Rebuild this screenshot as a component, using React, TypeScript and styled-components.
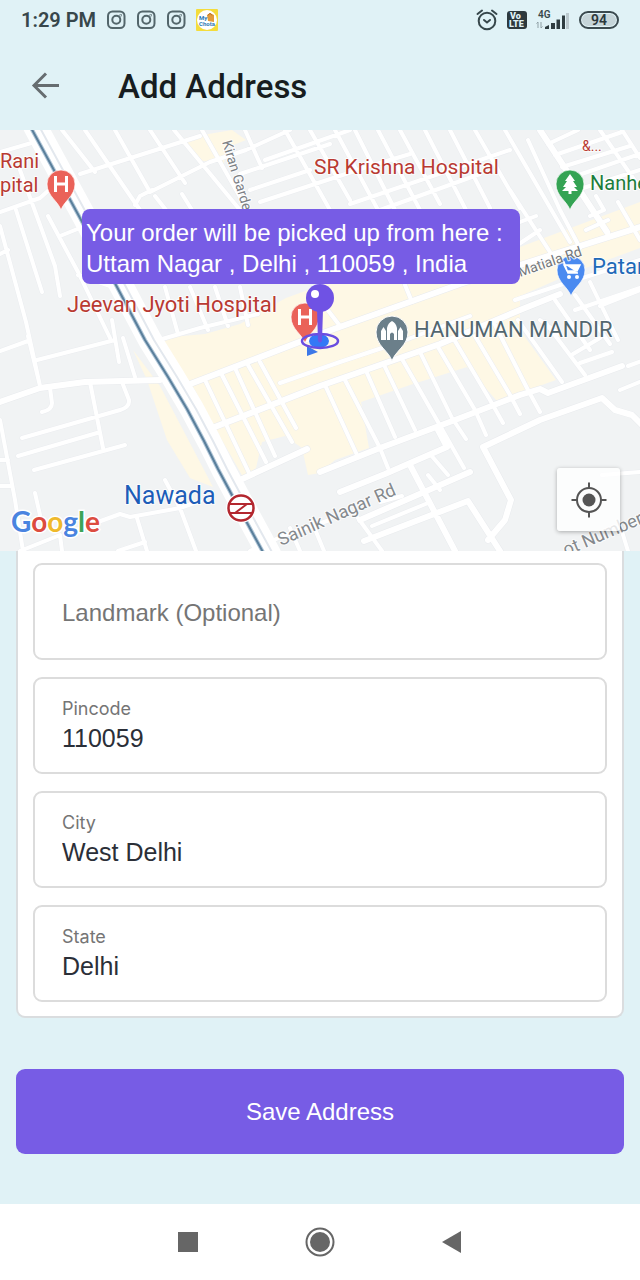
import React, { useId, useState } from "react";
import styled, { createGlobalStyle } from "styled-components";

const GlobalStyle = createGlobalStyle`
  *, *::before, *::after { box-sizing: border-box; }
  body { margin: 0; background: #e0f2f6; font-family: "Liberation Sans", sans-serif; }
  button, input { font: inherit; }
`;

const Screen = styled.div`
  min-height: 100vh;
  display: flex;
  flex-direction: column;
  background: #e0f2f6;
`;

const StatusBar = styled.div`
  display: flex;
  align-items: center;
  justify-content: space-between;
  height: 40px;
  padding: 0 21px;
  color: #37474b;
  font-family: Roboto, sans-serif;
`;

const StatusGroup = styled.div<{ $gap: number }>`
  display: flex;
  align-items: center;
  gap: ${(p) => p.$gap}px;
  svg { display: block; }
`;

const Clock = styled.span`
  font-size: 20px;
  line-height: 24px;
  font-weight: 600;
`;

const Battery = styled.span`
  display: flex;
  align-items: center;
  justify-content: center;
  width: 40px;
  height: 18px;
  border: 2px solid #3b4a4f;
  border-radius: 9px;
  background: #c6d5d9;
  box-shadow: inset 0 0 0 1px #e0f2f6;
  font-size: 14px;
  line-height: 14px;
  font-weight: 600;
  color: #2c383c;
`;

const Header = styled.header`
  display: flex;
  align-items: center;
  gap: 56px;
  height: 90px;
  padding: 3px 30px 0;
`;

const BackButton = styled.button`
  display: flex;
  width: 32px;
  height: 32px;
  padding: 0;
  border: 0;
  background: none;
  color: #666d70;
`;

const Title = styled.h1`
  margin: 0;
  font-family: Roboto, sans-serif;
  font-size: 33px;
  line-height: 40px;
  font-weight: 500;
  color: #171d20;
`;

const MapArea = styled.section`
  position: relative;
  height: 421px;
  overflow: hidden;
`;

const MapDrawing = styled.svg`
  display: block;
  width: 100%;
  height: 100%;
  font-family: Roboto, sans-serif;
`;

const PickupNote = styled.div`
  position: absolute;
  top: 79px;
  left: calc(50% - 238px);
  width: 438px;
  padding: 8px 4px 5px;
  border-radius: 8px;
  background: #775ce5;
  color: #fff;
  font-size: 24px;
  line-height: 31px;
  white-space: nowrap;
`;

const LocateButton = styled.button`
  position: absolute;
  right: 20px;
  bottom: 20px;
  display: flex;
  align-items: center;
  justify-content: center;
  width: 63px;
  height: 63px;
  padding: 0;
  border: 0;
  border-radius: 3px;
  background: rgba(255, 255, 255, 0.8);
  box-shadow: 0 1px 4px rgba(0, 0, 0, 0.3);
`;

const Form = styled.form`
  flex: 1;
  padding: 0 16px 49px;
`;

const Card = styled.div`
  display: flex;
  flex-direction: column;
  gap: 17px;
  padding: 12px 15px 14px;
  border: 2px solid #dadddf;
  border-top: 0;
  border-radius: 0 0 9px 9px;
  background: #fff;
`;

const FieldBox = styled.div`
  display: flex;
  flex-direction: column;
  justify-content: center;
  height: 97px;
  padding: 0 27px;
  border: 2px solid #dcdcdc;
  border-radius: 9px;
`;

const FieldLabel = styled.label`
  font-family: Inter, sans-serif;
  font-size: 18px;
  line-height: 24px;
  color: #757575;
`;

const HiddenLabel = styled.label`
  position: absolute;
  width: 1px;
  height: 1px;
  overflow: hidden;
  clip-path: inset(50%);
`;

const FieldInput = styled.input`
  width: 100%;
  height: 34px;
  padding: 0;
  border: 0;
  outline: 0;
  background: none;
  font-size: 25px;
  line-height: 34px;
  color: #2b2f38;
  &::placeholder { font-size: 24px; color: #757575; opacity: 1; }
`;

const SaveButton = styled.button`
  display: block;
  width: 100%;
  height: 85px;
  margin-top: 51px;
  border: 0;
  border-radius: 9px;
  background: #775ce5;
  color: #fff;
  font-size: 24px;
  line-height: 32px;
`;

const NavBar = styled.nav`
  display: flex;
  align-items: center;
  justify-content: center;
  gap: 100px;
  height: 76px;
  background: #fff;
`;

const NavButton = styled.button`
  display: flex;
  align-items: center;
  justify-content: center;
  width: 32px;
  height: 32px;
  padding: 0;
  border: 0;
  background: none;
`;

const InstagramIcon = () => (
  <svg width="20" height="20" viewBox="0 0 20 20" fill="none" stroke="#53666b" strokeWidth="2">
    <rect x="2" y="1.5" width="16.5" height="16.5" rx="4.5" />
    <circle cx="10.3" cy="9.8" r="4" />
    <circle cx="14.7" cy="5.200" r="0.3" />
  </svg>
);

const ShopAppIcon = () => (
  <svg width="22" height="22" viewBox="0 0 22 22">
    <rect width="22" height="22" rx="1" fill="#f4dc3c" />
    <circle cx="11" cy="11" r="10" fill="#fff" />
    <path d="M11 6l3-2 4 2v7l-6-1z" fill="#e39a3c" />
    <path d="M12 6.500q2-4 4 0" stroke="#b87328" fill="none" />
    <text x="3" y="11" fontSize="6" fontWeight="700" fill="#2b78b5" fontFamily="Roboto, sans-serif">My</text>
    <text x="3" y="17" fontSize="6" fontWeight="700" fill="#2b78b5" fontFamily="Roboto, sans-serif">Chota</text>
  </svg>
);

const AlarmIcon = () => (
  <svg width="22" height="22" viewBox="0 0 22 22" fill="none" stroke="#37474b" strokeWidth="2" strokeLinecap="round">
    <circle cx="11" cy="12" r="8.300" />
    <path d="M1.500 5L6 1.500M20.500 5L16 1.500M8 11l3 2.500 3-2.500" />
  </svg>
);

const VolteIcon = () => (
  <svg width="20" height="18" viewBox="0 0 20 18" fontFamily="Roboto, sans-serif" fontWeight="900" fill="#e0f2f6">
    <rect width="20" height="18" rx="3" fill="#2d393d" />
    <text x="3" y="8" fontSize="9">Vo</text>
    <text x="2" y="16" fontSize="9">LTE</text>
  </svg>
);

const SignalIcon = () => (
  <svg width="34" height="20" viewBox="0 0 34 20">
    <text x="2" y="8" fontSize="10" fontWeight="600" fill="#37474b" fontFamily="Roboto, sans-serif">4G</text>
    <path d="M2 18v-6M0.500 13.500L2 12M5 12v6M5 18l1.500-1.500" stroke="#8fa0a5" fill="none" />
    <path d="M9 19v-2l4-2v4zM15 13h4v6h-4zM20.500 9.500h3.500V19h-3.500zM26 5.500h3V19h-3z" fill="#2f3d41" />
    <path d="M30 3h3v16h-3z" fill="#bccacf" />
  </svg>
);

const BackArrow = () => (
  <svg width="32" height="32" viewBox="0 0 32 32" fill="none" stroke="currentColor" strokeWidth="3">
    <path d="M29 14.500H4M16 2.500L4 14.500l12 12" />
  </svg>
);

const LocateIcon = () => (
  <svg width="36" height="36" viewBox="0 0 36 36" fill="none" stroke="#555" strokeWidth="2">
    <circle cx="18" cy="18" r="12" />
    <circle cx="18" cy="18" r="6.500" fill="#555" stroke="none" />
    <path d="M18 0.500V7M18 29v6.500M0.500 18H7M29 18h6.500" />
  </svg>
);

const commercialAreas = [
  "M160 208L205 204 240 194 286 168 330 152 520 117 640 72V118L575 142 520 166V200L556 250 497 271 467 237 410 255 361 272 369 318 335 330 320 343 308 345 302 318 285 306 262 312 256 338 243 347 222 310 195 260Z",
  "M133 220L160 256 213 357 190 348 167 310 147 250Z",
  "M185 8L232 0 246 10 226 18 224 34 196 30Z",
];

const mainRoads = [
  "M185 256L320 204 460 154 640 97",
  "M207 300L320 256 440 214 520 180 560 164",
  "M320 342L380 318 455 290 520 265 540 259 548 263 622 236",
  "M0 272L40 258 85 252 160 250",
  "M540 0L607 102",
  "M483 317L540 290 602 268 615 280 632 285 642 295M483 317L511 370 505 390 488 410",
  "M240 350L307 319",
  "M340 362L385 344 447 317 437 298M360 390L470 342M364 411L468 371 500 421",
  "M410 335L455 421",
];

const sideRoads = [
  "M0 82L40 68 50 59M80 44L200 6M150 62L210 32 246 20 290 0",
  "M62 0L95 42M85 0L140 80M115 0L150 62M150 0L185 53M174 0L240 80M202 0L244 74M245 0L262 38",
  "M135 75L140 66 152 60M155 66L166 80M182 64L192 80M0 22L35 12M20 40L55 136 60 166M16 80L42 162M0 96L26 192 40 256M48 86L78 142 110 208M60 106L80 98M0 124L8 120M78 145L122 160 140 202M165 157L178 204M190 157L208 200M215 157L228 196M240 157L248 195",
  "M145 214L200 198 258 184M0 221L28 211M28 206L40 256M37 230L115 210M112 190L119 232M123 208L135 247",
  "M90 252L103 318M122 252L129 270Q130 277 120 280L22 308M18 326L97 303M34 340L125 315M50 258L52 273Q52 280 42 282",
  "M0 290L15 370 23 421M0 330L8 330M0 356L10 356M35 363L40 385M65 404L120 384 130 387 180 378 200 371M165 350L180 378 196 421M137 388L147 421M20 421L60 405 62 421M118 421L145 412",
  "M205 250L250 345M222 245L266 332M235 238L275 326M248 235L292 312M260 232L296 298M280 253L340 232 400 212 470 186",
  "M325 255L357 325M345 250L380 318 388 338M367 243L395 307M385 237L415 300M402 229L438 292 464 338M420 222L452 288 466 309M438 217L475 280 486 305M455 211L490 270 503 293M475 206L510 265 520 284M495 195L528 260 540 282M518 190L562 252M545 192L585 245M573 224L600 208M580 233L612 222",
  "M620 260L642 251M628 236L642 231M540 190L562 206M555 170L590 220M575 165L610 214M600 176L640 160M590 152L618 210M515 170L560 155 640 130M575 180L640 158",
  "M265 30L350 0M240 44L330 14M250 60L310 40M260 72L370 36 410 24M350 74L510 20M380 80L480 44",
  "M285 0L330 80M310 0L350 70M335 0L378 80M355 0L395 80M378 0L420 80M400 0L440 74M425 0L466 80M450 0L490 78M475 0L520 78M505 0L570 112M528 10L560 80 580 118M510 60L550 122M520 92L536 86",
  "M548 14L578 0M555 25L622 2M562 37L630 16M570 48L640 24M577 60L640 40M590 86L604 80 596 66M600 0L640 58M622 0L640 28M586 100L608 90M618 72L640 110M320 170L340 196M405 155L412 172M516 116L540 100",
  "M250 421L285 405 330 390M290 398L300 421M312 392L324 421M428 345L440 360M405 335L430 324 448 345M380 372L402 366M358 388L382 421M372 396L428 373M602 345L640 342M620 395L628 421",
];

const metroPath = "M30 -4L80 88 117 157 145 210 168 247 187 279 204 311 218 339 233 367 264 424";

type PinProps = { x: number; y: number; color: string; children: React.ReactNode };

const PlacePin = ({ x, y, color, children }: PinProps) => (
  <g transform={`translate(${x} ${y})`}>
    <path
      d="M0 26C-3 17-14 12-14 0A14 14 0 0 1 14 0C14 12 3 17 0 26Z"
      fill={color}
      stroke="#fff"
      strokeOpacity="0.7"
      strokeWidth="1"
    />
    {children}
  </g>
);

const HospitalMark = () => (
  <path d="M-5.500 -8V8M5.500 -8V8M-5.500 0H5.500" stroke="#fff" strokeWidth="3" fill="none" />
);

type LabelProps = { x: number; y: number; color: string; size?: number; rotate?: number; children: string };

const MapLabel = ({ x, y, color, size = 22, rotate = 0, children }: LabelProps) => (
  <text
    transform={`translate(${x} ${y}) rotate(${rotate})`}
    fontSize={size}
    fill={color}
    stroke="#fff"
    strokeOpacity="0.8"
    strokeWidth="2"
    strokeLinejoin="round"
    paintOrder="stroke"
  >
    {children}
  </text>
);

const StreetMap = () => (
  <MapDrawing viewBox="0 0 640 421" preserveAspectRatio="xMidYMid slice" role="img" aria-label="Map of Nawada">
    <rect x="-640" width="1920" height="421" fill="#f1f3f4" />
    {commercialAreas.map((d) => (
      <path key={d} d={d} fill="#fef8e5" />
    ))}
    <g fill="none" strokeLinejoin="round" strokeLinecap="round">
      <path d={sideRoads.join("")} stroke="#ebedf0" strokeWidth="5" />
      <path d={mainRoads.join("")} stroke="#e9ebee" strokeWidth="7" />
      <path d={sideRoads.join("")} stroke="#fff" strokeWidth="4" />
      <path d={mainRoads.join("")} stroke="#fff" strokeWidth="6" />
      <path d={metroPath} stroke="#fff" strokeWidth="24" transform="translate(5 0)" />
      <path d={metroPath} stroke="#e3e8ee" strokeWidth="2" transform="translate(9 0)" />
      <path d={metroPath} stroke="#b3c8d9" strokeWidth="4" />
      <path d={metroPath} stroke="#5a7f9b" strokeWidth="2" />
    </g>

    <MapLabel x={222} y={12} size={14} rotate={73} color="#7c8085">Kiran Garden Rd</MapLabel>
    <MapLabel x={281} y={416} size={18} rotate={-24} color="#85898d">Sainik Nagar Rd</MapLabel>
    <MapLabel x={566} y={426} size={18} rotate={-23} color="#85898d">ot Number</MapLabel>

    <MapLabel x={0} y={38} size={20} color="#b93a32">Rani</MapLabel>
    <MapLabel x={0} y={62} size={20} color="#b93a32">pital</MapLabel>
    <PlacePin x={61} y={54} color="#ea6259"><HospitalMark /></PlacePin>
    <MapLabel x={314} y={44} size={21} color="#b93a32">SR Krishna Hospital</MapLabel>
    <MapLabel x={582} y={21} size={14} color="#b93a32">&amp;...</MapLabel>
    <MapLabel x={67} y={182} color="#b93a32">Jeevan Jyoti Hospital</MapLabel>
    <PlacePin x={305} y={187} color="#ea6259"><HospitalMark /></PlacePin>

    <PlacePin x={570} y={54} color="#34a353">
      <path d="M0 -10L5 -3H3L7 3H4L8 7H1.500V10H-1.500V7H-8L-4 3H-7L-3 -3H-5Z" fill="#fff" />
    </PlacePin>
    <MapLabel x={590} y={60} size={20} color="#1b7d3c">Nanhey</MapLabel>

    <PlacePin x={571} y={140} color="#4a8af0">
      <path d="M-10 -8H-7L-3 3H7M-7 -5H9L6 1H-4Z" fill="#fff" stroke="#fff" strokeWidth="1.500" />
      <circle cx="-2" cy="7" r="2" fill="#fff" />
      <circle cx="6" cy="7" r="2" fill="#fff" />
    </PlacePin>
    <MapLabel x={520} y={147} size={14} rotate={-19} color="#73777c">Matiala Rd</MapLabel>
    <MapLabel x={592} y={144} color="#2069b8">Patanjali</MapLabel>

    <g transform="translate(392 202)">
      <path d="M0 29C-3 19-16 14-16 0A16 16 0 0 1 16 0C16 14 3 19 0 29Z" fill="#6b7f8a" stroke="#fff" strokeWidth="1" />
      <path d="M-11 8V-1L-8.500 -5 -6 -1V8ZM11 8V-1L8.500 -5 6 -1V8ZM-5 8V-4Q-4 -9 0 -11Q4 -9 5 -4V8H2V2Q0 -1 -2 2V8Z" fill="#fff" />
    </g>
    <MapLabel x={414} y={207} color="#52666f">HANUMAN MANDIR</MapLabel>

    <MapLabel x={124} y={374} size={25} color="#1d5db8">Nawada</MapLabel>
    <g transform="translate(241 378)" fill="none" stroke="#b3272f">
      <circle r="15" fill="#fff" stroke="none" />
      <circle r="12.500" strokeWidth="2.500" />
      <path d="M-11 -4H11M-11 5H11M6 -4L-6 5" strokeWidth="2" />
    </g>

    <text
      x="11"
      y="402"
      fontFamily="Lato, sans-serif"
      fontSize="28"
      fontWeight="700"
      stroke="#fff"
      strokeWidth="3"
      paintOrder="stroke"
    >
      <tspan fill="#4a84e0">G</tspan>
      <tspan fill="#dc4c40">o</tspan>
      <tspan fill="#efb92c">o</tspan>
      <tspan fill="#4a84e0">g</tspan>
      <tspan fill="#3da457">l</tspan>
      <tspan fill="#dc4c40">e</tspan>
    </text>

    <path d="M307 216l11 6-11 4z" fill="#3c78e8" />
    <ellipse cx="319" cy="211" rx="10" ry="7" fill="#3478f6" />
    <ellipse cx="320" cy="211" rx="18" ry="7" fill="none" stroke="#6a4de0" strokeWidth="2.500" />
    <path d="M317 180h6l-1 31q-2 3-4 0z" fill="#6f52e4" />
    <circle cx="320" cy="168" r="14" fill="#6f52e4" />
    <circle cx="315" cy="164" r="4" fill="#fff" />
  </MapDrawing>
);

type FieldProps = { label: string; initial?: string; floating?: boolean };

const Field = ({ label, initial = "", floating = true }: FieldProps) => {
  const id = useId();
  const [value, setValue] = useState(initial);
  const LabelTag = floating ? FieldLabel : HiddenLabel;
  return (
    <FieldBox>
      <LabelTag htmlFor={id}>{label}</LabelTag>
      <FieldInput
        id={id}
        value={value}
        placeholder={floating ? undefined : label}
        onChange={(e) => setValue(e.target.value)}
      />
    </FieldBox>
  );
};

export default function App() {
  return (
    <Screen>
      <GlobalStyle />
      <StatusBar>
        <StatusGroup $gap={10}>
          <Clock>1:29 PM</Clock>
          <InstagramIcon />
          <InstagramIcon />
          <InstagramIcon />
          <ShopAppIcon />
        </StatusGroup>
        <StatusGroup $gap={9}>
          <AlarmIcon />
          <VolteIcon />
          <SignalIcon />
          <Battery>94</Battery>
        </StatusGroup>
      </StatusBar>
      <Header>
        <BackButton type="button" aria-label="Back">
          <BackArrow />
        </BackButton>
        <Title>Add Address</Title>
      </Header>
      <MapArea>
        <StreetMap />
        <PickupNote>
          Your order will be picked up from here :
          <br />
          Uttam Nagar , Delhi , 110059 , India
        </PickupNote>
        <LocateButton type="button" aria-label="Use my location">
          <LocateIcon />
        </LocateButton>
      </MapArea>
      <Form onSubmit={(e) => e.preventDefault()}>
        <Card>
          <Field label="Landmark (Optional)" floating={false} />
          <Field label="Pincode" initial="110059" />
          <Field label="City" initial="West Delhi" />
          <Field label="State" initial="Delhi" />
        </Card>
        <SaveButton type="submit">Save Address</SaveButton>
      </Form>
      <NavBar>
        <NavButton type="button" aria-label="Recent apps">
          <svg width="20" height="20"><rect width="20" height="20" fill="#666" /></svg>
        </NavButton>
        <NavButton type="button" aria-label="Home">
          <svg width="30" height="30" viewBox="0 0 30 30">
            <circle cx="15" cy="15" r="13.500" fill="none" stroke="#666" strokeWidth="2" />
            <circle cx="15" cy="15" r="10" fill="#666" />
          </svg>
        </NavButton>
        <NavButton type="button" aria-label="Back">
          <svg width="20" height="24" viewBox="0 0 20 24"><path d="M19 1v22L0 12z" fill="#666" /></svg>
        </NavButton>
      </NavBar>
    </Screen>
  );
}
